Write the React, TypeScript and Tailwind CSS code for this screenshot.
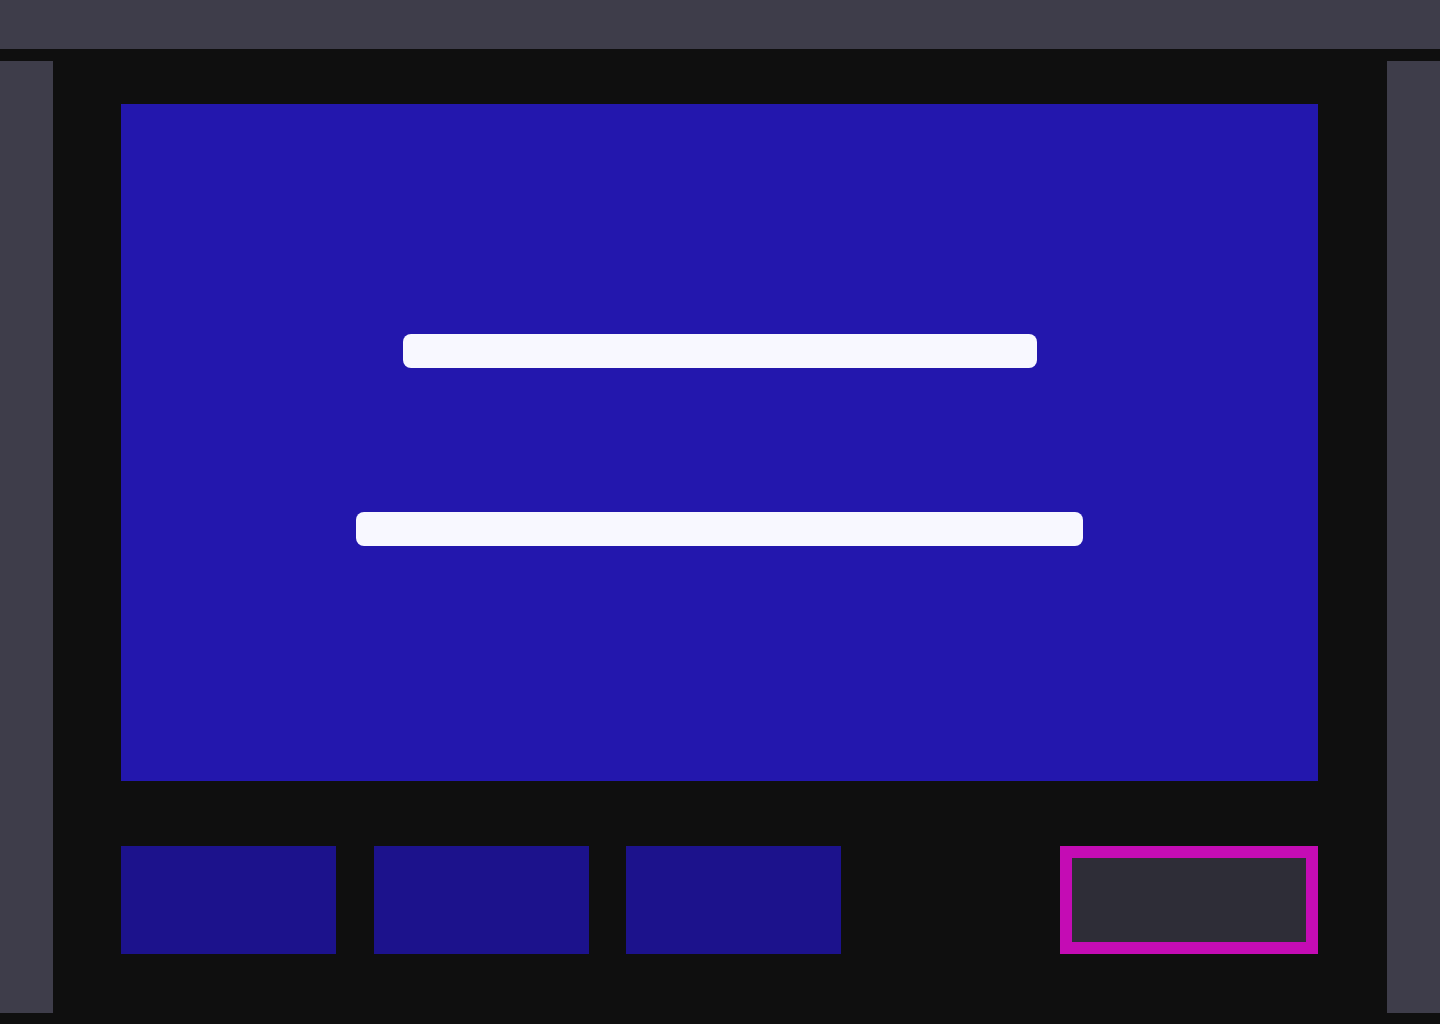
import React from "react";

export default function App() {
  return (
    <div className="w-[1440px] h-[1024px] bg-[#0f0f0f] flex flex-col overflow-hidden" style={{ fontFamily: "'Liberation Sans', sans-serif" }}>
      <div className="h-[49px] bg-[#3e3d4a] shrink-0" />
      <div className="flex mt-[12px]">
        <div className="w-[53px] h-[952px] bg-[#3e3d4a] shrink-0" />
        <div className="ml-[68px] w-[1197px] pt-[43px] flex flex-col">
          <div className="h-[677px] bg-[#2317ad] flex flex-col items-center pt-[230px]">
            <div className="w-[634px] h-[34px] rounded-lg bg-[#f8f8ff]" />
            <div className="w-[727px] h-[34px] rounded-lg bg-[#f8f8ff] mt-[144px]" />
          </div>
          <div className="flex mt-[65px]">
            <div className="w-[215px] h-[108px] bg-[#1c128c]" />
            <div className="ml-[38px] w-[215px] h-[108px] bg-[#1c128c]" />
            <div className="ml-[37px] w-[215px] h-[108px] bg-[#1c128c]" />
            <div className="ml-auto w-[258px] h-[108px] border-[12px] border-[#c40cb4] bg-[#2e2d37]" />
          </div>
        </div>
        <div className="ml-auto w-[53px] h-[952px] bg-[#3e3d4a] shrink-0" />
      </div>
    </div>
  );
}
